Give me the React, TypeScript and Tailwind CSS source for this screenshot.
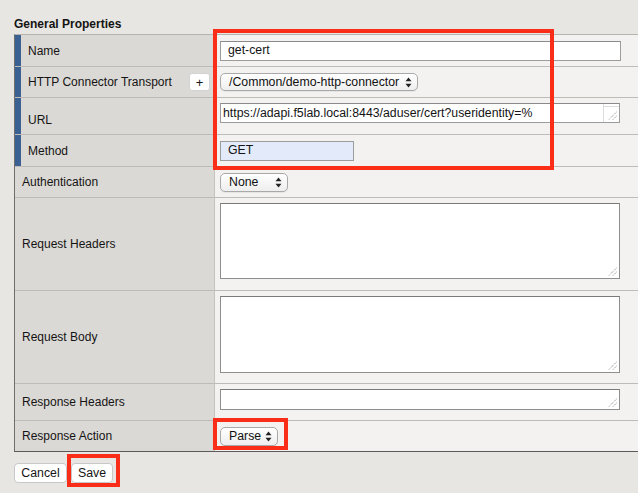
import React from "react";

const Arrows = () => (
  <svg width="7" height="11" viewBox="0 0 7 11" className="shrink-0">
    <path d="M3.5 0.5 L6.5 4.2 L0.5 4.2 Z" fill="#222" />
    <path d="M3.5 10.5 L6.5 6.8 L0.5 6.8 Z" fill="#222" />
  </svg>
);

const Grip = () => (
  <svg width="9" height="9" viewBox="0 0 9 9" className="absolute right-[2px] bottom-[2px]">
    <path d="M8.5 1 L1 8.5" stroke="#7a7a7a" strokeWidth="1" strokeDasharray="1 1" />
    <path d="M8.5 5 L5 8.5" stroke="#7a7a7a" strokeWidth="1" strokeDasharray="1 1" />
  </svg>
);

function Select({ label, w, h }: { label: string; w: string; h: string }) {
  return (
    <div
      className={`${w} ${h} flex items-center justify-between pl-[8px] pr-[5px] rounded-[5px] border border-[#a9a9a9] bg-gradient-to-b from-[#ffffff] to-[#eeeeee] shadow-[0_1px_0_rgba(0,0,0,0.05)] text-[12.3px] text-[#111]`}
    >
      <span className="leading-none">{label}</span>
      <Arrows />
    </div>
  );
}

function Row({
  label,
  h,
  req,
  last,
  extra,
  align = "center",
  labelPt,
  children,
}: {
  label: string;
  h: string;
  req?: boolean;
  last?: boolean;
  extra?: React.ReactNode;
  align?: "center" | "start";
  labelPt?: string;
  children?: React.ReactNode;
}) {
  return (
    <div className={`flex ${h} ${last ? "" : "border-b border-b-[#bdbcb9]"}`}>
      <div className="w-[200px] shrink-0 flex bg-[#dbd9d5] border-r border-r-[#c4c3c0]">
        {req && <div className="w-[6px] shrink-0 bg-[#3a6192]" />}
        <div
          className={`flex-1 flex ${labelPt ? `items-start ${labelPt}` : "items-center"} justify-between pl-[7px] pr-[4px]`}
        >
          <span>{label}</span>
          {extra}
        </div>
      </div>
      <div
        className={`flex-1 flex ${align === "center" ? "items-center" : "items-start pt-[5px]"} pl-[5px] bg-[#f3f2f0]`}
      >
        {children}
      </div>
    </div>
  );
}

export default function App() {
  return (
    <div className="relative w-[638px] h-[493px] overflow-hidden bg-[#e7e6e2] font-['Liberation_Sans',Arial,sans-serif] text-[12px] text-[#141414]">
      <div className="pl-[14px] pt-[16px] font-bold leading-[16px]">General Properties</div>
      <div className="ml-[14px] mt-[2px] w-[640px] border-l border-l-[#6e6e6e] border-t border-t-[#b5b4b1] border-b border-b-[#5a5a5a]">
        <Row label="Name" h="h-[32px]" req>
          <div className="w-[401px] h-[20px] flex items-center pl-[7px] bg-white border border-[#9c9c9c] border-t-[#8a8a8a] text-[12.3px]">
            get-cert
          </div>
        </Row>
        <Row
          label="HTTP Connector Transport"
          h="h-[31px]"
          req
          extra={
            <div className="w-[21px] h-[18px] flex items-center justify-center bg-white border border-[#d3d3d3] rounded-[3px] text-[13px] leading-none">
              +
            </div>
          }
        >
          <Select label="/Common/demo-http-connector" w="w-[198px]" h="h-[18px]" />
        </Row>
        <Row label="URL" h="h-[37px]" req align="start" labelPt="pt-[13px]">
          <div className="relative w-[400px] h-[20px] flex items-center pl-[2px] bg-white border border-[#9c9c9c] border-t-[#8a8a8a] text-[12.3px]">
            https://adapi.f5lab.local:8443/aduser/cert?useridentity=%
            <div className="absolute right-0 top-0 bottom-0 w-[16px] border-l border-l-[#dcdcdc]">
              <div className="h-[3px] border-b border-b-[#dcdcdc]" />
            </div>
            <Grip />
          </div>
        </Row>
        <Row label="Method" h="h-[32px]" req>
          <div className="w-[134px] h-[20px] flex items-center pl-[7px] bg-[#e3ebfa] border border-[#9c9c9c] text-[12.3px]">
            GET
          </div>
        </Row>
        <Row label="Authentication" h="h-[31px]">
          <Select label="None" w="w-[68px]" h="h-[19px]" />
        </Row>
        <Row label="Request Headers" h="h-[93px]" align="start">
          <div className="relative w-[400px] h-[76px] bg-white border border-[#8e8e8e] border-t-[#7a7a7a]">
            <Grip />
          </div>
        </Row>
        <Row label="Request Body" h="h-[93px]" align="start">
          <div className="relative w-[400px] h-[77px] bg-white border border-[#8e8e8e] border-t-[#7a7a7a]">
            <Grip />
          </div>
        </Row>
        <Row label="Response Headers" h="h-[37px]" align="start">
          <div className="relative w-[400px] h-[21px] bg-white border border-[#8e8e8e] border-t-[#7a7a7a]">
            <Grip />
          </div>
        </Row>
        <Row label="Response Action" h="h-[30px]" last>
          <Select label="Parse" w="w-[58px]" h="h-[19px]" />
        </Row>
      </div>
      <div className="flex gap-[4px] ml-[14px] mt-[11px]">
        <div className="w-[53px] h-[20px] flex items-center justify-center bg-white border border-[#c8c8c8] rounded-[4px] text-[12.3px]">
          Cancel
        </div>
        <div className="w-[42px] h-[20px] flex items-center justify-center bg-white border border-[#c8c8c8] rounded-[4px] text-[12.3px]">
          Save
        </div>
      </div>

      {/* annotation highlight boxes */}
      <div className="absolute left-[213px] top-[29px] w-[341px] h-[141px] border-[4px] border-[#fa2d18]" />
      <div className="absolute left-[213px] top-[418px] w-[75px] h-[32px] border-[4px] border-[#fa2d18]" />
      <div className="absolute left-[67px] top-[454px] w-[53px] h-[33px] border-[4px] border-[#fa2d18]" />
    </div>
  );
}
